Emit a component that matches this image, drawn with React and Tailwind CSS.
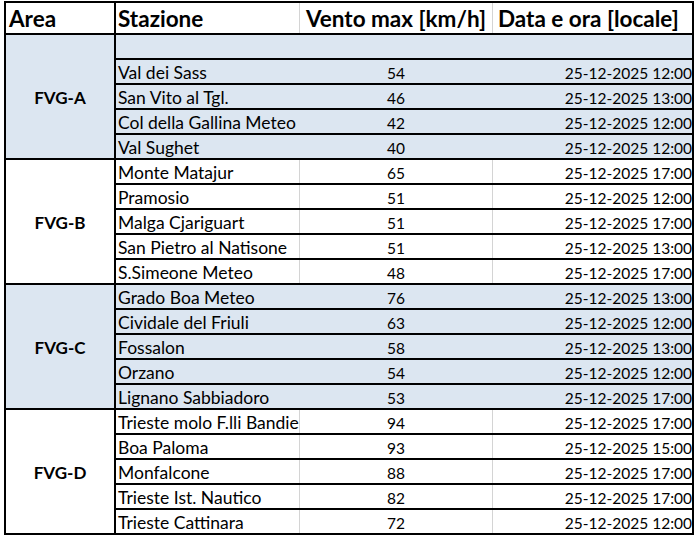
const groups = [
  {
    area: "FVG-A",
    blue: true,
    rows: [
      ["", "", ""],
      ["Val dei Sass", "54", "25-12-2025 12:00"],
      ["San Vito al Tgl.", "46", "25-12-2025 13:00"],
      ["Col della Gallina Meteo", "42", "25-12-2025 12:00"],
      ["Val Sughet", "40", "25-12-2025 12:00"],
    ],
  },
  {
    area: "FVG-B",
    blue: false,
    rows: [
      ["Monte Matajur", "65", "25-12-2025 17:00"],
      ["Pramosio", "51", "25-12-2025 12:00"],
      ["Malga Cjariguart", "51", "25-12-2025 17:00"],
      ["San Pietro al Natisone", "51", "25-12-2025 13:00"],
      ["S.Simeone Meteo", "48", "25-12-2025 17:00"],
    ],
  },
  {
    area: "FVG-C",
    blue: true,
    rows: [
      ["Grado Boa Meteo", "76", "25-12-2025 13:00"],
      ["Cividale del Friuli", "63", "25-12-2025 12:00"],
      ["Fossalon", "58", "25-12-2025 13:00"],
      ["Orzano", "54", "25-12-2025 12:00"],
      ["Lignano Sabbiadoro", "53", "25-12-2025 17:00"],
    ],
  },
  {
    area: "FVG-D",
    blue: false,
    rows: [
      ["Trieste molo F.lli Bandiera", "94", "25-12-2025 17:00"],
      ["Boa Paloma", "93", "25-12-2025 15:00"],
      ["Monfalcone", "88", "25-12-2025 17:00"],
      ["Trieste Ist. Nautico", "82", "25-12-2025 17:00"],
      ["Trieste Cattinara", "72", "25-12-2025 12:00"],
    ],
  },
];

const Row = ({ cells, blue, last }) => {
  const grid = blue ? "border-transparent" : "border-[#d4d4d4]";
  return (
    <div
      className={`flex items-center ${
        last ? "h-[23px]" : "h-[25px] border-b-2 border-black"
      }`}
    >
      <div
        className={`w-[184px] h-full flex items-center pt-[4px] pl-[2px] overflow-hidden whitespace-nowrap border-r text-[17.5px] ${grid}`}
      >
        {cells[0]}
      </div>
      <div
        className={`w-[193px] h-full flex items-center justify-center pt-[4px] border-r text-[15.5px] ${grid}`}
      >
        {cells[1]}
      </div>
      <div className="w-[199px] h-full flex items-center justify-end pt-[4px] overflow-hidden whitespace-nowrap text-[15.5px]">
        {cells[2]}
      </div>
    </div>
  );
};

export default function App() {
  return (
    <div className="w-[697px] h-[540px] bg-white pt-[1px] pl-[4px] text-black font-['Lato',sans-serif]">
      <div className="w-[690px] border-2 border-black">
        <div className="flex h-[32px] border-b-2 border-black text-[22.5px] font-bold">
          <div className="w-[110px] flex items-center pt-[2px] pl-[3px] border-r-2 border-black">
            Area
          </div>
          <div className="w-[184px] flex items-center pt-[2px] pl-[2px] border-r border-[#d4d4d4]">
            Stazione
          </div>
          <div className="w-[193px] flex items-center justify-center pt-[2px] border-r border-[#d4d4d4] whitespace-nowrap">
            Vento max [km/h]
          </div>
          <div className="w-[199px] flex items-center pt-[2px] pl-[5px] whitespace-nowrap">
            Data e ora [locale]
          </div>
        </div>
        {groups.map((g, gi) => (
          <div
            key={g.area}
            className={`flex ${g.blue ? "bg-[#dce6f1]" : "bg-white"} ${
              gi < groups.length - 1 ? "border-b-2 border-black" : ""
            }`}
          >
            <div className="w-[110px] flex items-center justify-center pt-[2px] border-r-2 border-black text-[17px] font-bold">
              {g.area}
            </div>
            <div className="w-[576px]">
              {g.rows.map((r, ri) => (
                <Row
                  key={ri}
                  cells={r}
                  blue={g.blue}
                  last={ri === g.rows.length - 1}
                />
              ))}
            </div>
          </div>
        ))}
      </div>
    </div>
  );
}
